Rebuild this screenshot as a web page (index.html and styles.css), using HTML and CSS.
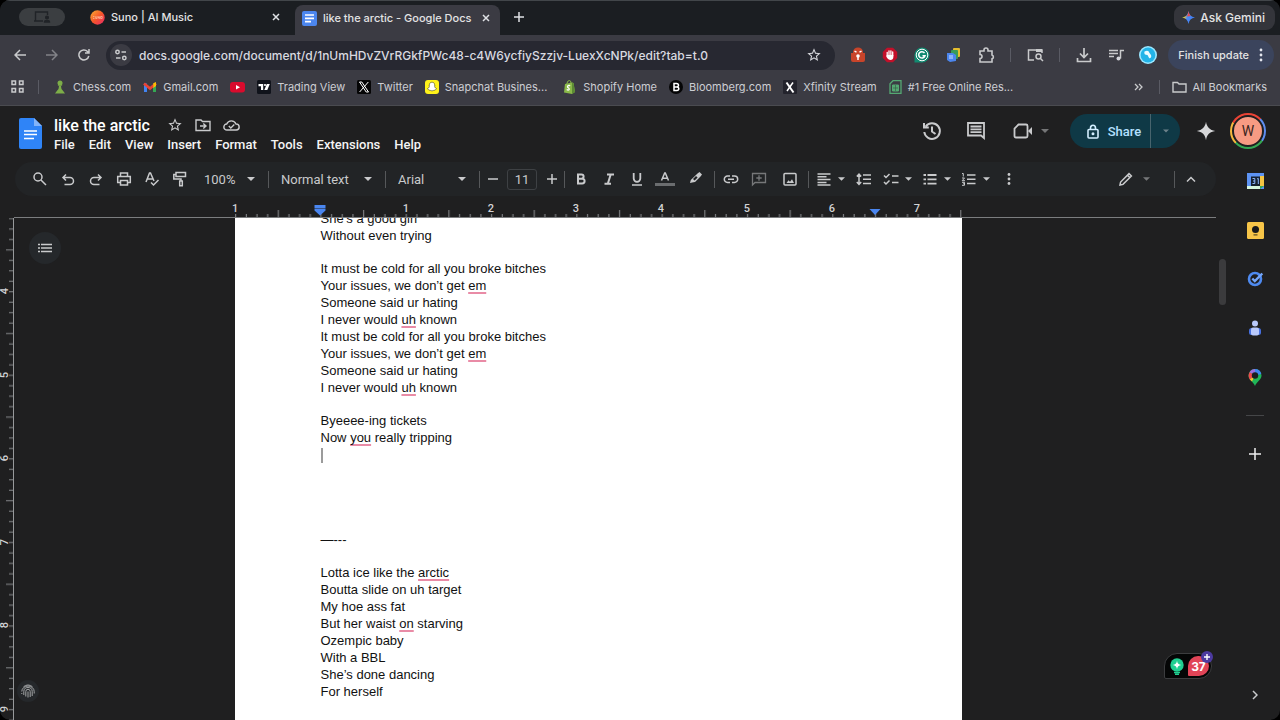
FILE: index.html
```html
<!DOCTYPE html>
<html lang="en">
  <head>
    <meta charset="UTF-8" />
    <meta name="viewport" content="width=device-width, initial-scale=1.0" />
    <title>like the arctic - Google Docs</title>
    <link rel="stylesheet" href="styles.css">
  </head>
  <body>
    <div class="window">
      <!-- Tabs -->
      <div class="tab-strip">
        <button class="share-pill" aria-label="Window sharing">
          <svg width="18" height="14" viewBox="0 0 18 14" fill="none" stroke="#202327" stroke-width="1.4"><path d="M10 11H2.5V2h12v3M1 11h9"/><circle cx="14" cy="7.5" r="1.4" fill="#202327"/><path d="M11.5 12c0-2 5-2 5 0z" fill="#202327"/></svg>
        </button>
        <div class="tab">
          <svg width="15" height="15" viewBox="0 0 15 15"><defs><linearGradient id="suno" x1="0" y1="0" x2="1" y2="1"><stop offset="0" stop-color="#f9b233"/><stop offset=".5" stop-color="#f5562a"/><stop offset="1" stop-color="#e8286b"/></linearGradient></defs><circle cx="7.5" cy="7.5" r="7.2" fill="url(#suno)"/><path d="M3 6.6h1.5M3 8.4h1.5M5.7 6.3v2.2h1.2V6.3M8.1 8.7V6.4l1.3 2.2V6.3M10.6 6.5h1.6v2h-1.6z" stroke="#ffd9b8" stroke-width=".6" fill="none"/></svg>
          <span>Suno | AI Music</span>
          <button class="tab-close" aria-label="Close tab"><svg width="8" height="8" viewBox="0 0 8 8"><path d="M1 1l6 6M7 1L1 7" stroke="#dfe1e5" stroke-width="1.5"/></svg></button>
        </div>
        <div class="tab active">
          <svg width="15" height="15" viewBox="0 0 15 15"><rect width="15" height="15" rx="2" fill="#4c86ee"/><path d="M3 4h9M3 7.3h9M3 10.6h6" stroke="#fff" stroke-width="1.7"/></svg>
          <span>like the arctic - Google Docs</span>
          <button class="tab-close" aria-label="Close tab"><svg width="8" height="8" viewBox="0 0 8 8"><path d="M1 1l6 6M7 1L1 7" stroke="#dfe1e5" stroke-width="1.5"/></svg></button>
        </div>
        <button class="new-tab" aria-label="New tab"><svg width="10" height="10" viewBox="0 0 10 10"><path d="M5 0v10M0 5h10" stroke="#dfe1e5" stroke-width="1.5"/></svg></button>
        <button class="gemini">
          <svg width="13" height="13" viewBox="0 0 24 24"><defs><linearGradient id="gem" x1="0" y1="0" x2="1" y2=".3"><stop offset=".1" stop-color="#3fc15c"/><stop offset=".3" stop-color="#e7c140"/><stop offset=".5" stop-color="#4c8bf5"/><stop offset="1" stop-color="#3e7bf0"/></linearGradient></defs><path d="M12 0c1 7 5 11 12 12-7 1-11 5-12 12-1-7-5-11-12-12 7-1 11-5 12-12z" fill="url(#gem)"/><path d="M12 0c.5 4 2 7 4 9l-7 1c2-3 2.600-6 3-10z" fill="#ea4a4a"/></svg>
          Ask Gemini
        </button>
      </div>

      <!-- Address bar -->
      <div class="nav-bar">
        <button class="nav-btn" aria-label="Back"><svg width="12" height="12" viewBox="0 0 12 12" class="line"><path d="M12 6H1M6 1L1 6l5 5"/></svg></button>
        <button class="nav-btn dim" aria-label="Forward"><svg width="12" height="12" viewBox="0 0 12 12" class="line"><path d="M0 6h11M6 1l5 5-5 5"/></svg></button>
        <button class="nav-btn" aria-label="Reload"><svg width="12" height="12" viewBox="0 0 12 12" class="line"><path d="M10.800 7A5 5 0 1 1 9.500 2.400L11 4M11 0v4H7"/></svg></button>
        <div class="address">
          <button class="site-info" aria-label="Site information"><svg width="12" height="12" viewBox="0 0 12 12" class="line"><circle cx="2.500" cy="3" r="1.700"/><path d="M6.500 3H11M1 9h4.500"/><circle cx="9.300" cy="9" r="1.700"/></svg></button>
          <input type="text" aria-label="Address" value="docs.google.com/document/d/1nUmHDvZVrRGkfPWc48-c4W6ycfiySzzjv-LuexXcNPk/edit?tab=t.0" />
          <button class="bookmark-star" aria-label="Bookmark this tab"><svg width="16" height="16" viewBox="0 0 24 24" fill="#d6d7dc"><path d="M22 9.240l-7.190-.62L12 2 9.190 8.630 2 9.240l5.460 4.730L5.820 21 12 17.270 18.180 21l-1.630-7.030L22 9.240zM12 15.400l-3.760 2.270 1-4.280-3.320-2.880 4.380-.38L12 6.100l1.710 4.040 4.380.38-3.320 2.880 1 4.280L12 15.400z"/></svg></button>
        </div>
        <div class="extensions">
          <button aria-label="Password lock"><svg width="16" height="16" viewBox="0 0 16 16"><path d="M3 6V5a5 4.500 0 0 1 10 0v1h2v7a2 2 0 0 1-2 2H3a2 2 0 0 1-2-2V6z" fill="#c8442a"/><path d="M4.500 4.200l2 1M11.500 4.200l-2 1" stroke="#fff" stroke-width="1.500"/><circle cx="8" cy="9" r="1.800" fill="#fff"/><path d="M8 9v4" stroke="#fff" stroke-width="1.500"/></svg></button>
          <button aria-label="Ad blocker"><svg width="16" height="16" viewBox="0 0 16 16"><path d="M5 .8h6L15.200 5v6L11 15.200H5L.8 11V5z" fill="#c3102a"/><path d="M5.200 9.500V5.300M7 8V3.800M8.900 8V3.800M10.700 9V5" stroke="#fff" stroke-width="1.300" stroke-linecap="round"/><path d="M4.600 8h6.700v2.500c0 3-5 3.500-6.700-.5z" fill="#fff"/></svg></button>
          <button aria-label="Grammarly"><svg width="16" height="16" viewBox="0 0 16 16"><path d="M.5 15.500V8A7.500 7.500 0 1 1 8 15.500z" fill="#128a71"/><circle cx="8" cy="8" r="5.800" fill="none" stroke="#fff" stroke-width="1"/><path d="M10.500 6A3.200 3.200 0 1 0 11 8.700H8.500" fill="none" stroke="#fff" stroke-width="1.500"/></svg></button>
          <button aria-label="Docs offline"><svg width="16" height="16" viewBox="0 0 16 16"><rect x="7" y="1" width="7" height="9" rx="1" fill="#e5bd2e"/><rect x="5" y="3" width="7" height="9" rx="1" fill="#3a9b58"/><path d="M1 6h6l3 2v6l-6 1-3-2z" fill="#4c86ee"/><path d="M3 9h4M3 11h4" stroke="#cfe0ff"/></svg></button>
          <button aria-label="Extensions"><svg width="17" height="17" viewBox="0 0 17 17" class="line"><path d="M2 4h4V3a2 2 0 0 1 4 0v1h4v4a2 2 0 0 1 0 3.800V15H2v-3.500a2 2 0 0 0 0-4z" stroke-width="1.600"/></svg></button>
          <i class="divider"></i>
          <button aria-label="Search side panel"><svg width="17" height="14" viewBox="0 0 17 14" class="line"><path d="M7 12H1.500V2H15v3" /><path d="M9 2.500h6" stroke-width="3"/><circle cx="11.500" cy="8.500" r="2.500"/><path d="M13.500 10.500l2.500 2.500"/></svg></button>
          <i class="divider"></i>
          <button aria-label="Downloads"><svg width="16" height="16" viewBox="0 0 16 16" class="line"><path d="M8 1v9M4 6.500l4 4 4-4M1.500 11v3.500h13V11" stroke-width="1.700"/></svg></button>
          <button aria-label="Media controls"><svg width="16" height="14" viewBox="0 0 16 14" class="line"><path d="M1 2.500h9M1 5.500h9M1 8.500h5M12.500 10.500v-8H16"/><circle cx="10.500" cy="10.500" r="2" fill="#d6d7dc" stroke="none"/></svg></button>
          <button aria-label="Profile"><svg width="18" height="18" viewBox="0 0 18 18"><circle cx="9" cy="9" r="9" fill="#9be7ff"/><circle cx="9" cy="9" r="7.400" fill="#22b4e8"/><path d="M5.500 5.500q4-2 5 1.500l1.500 2q1 3-1.800 3.300L8.500 9Q4.500 9 5.500 5.500z" fill="#e9fbff"/></svg></button>
        </div>
        <button class="finish-update">Finish update
          <svg width="4" height="14" viewBox="0 0 4 14" fill="#e3e6ee"><circle cx="2" cy="2" r="1.400"/><circle cx="2" cy="7" r="1.400"/><circle cx="2" cy="12" r="1.400"/></svg>
        </button>
      </div>

      <!-- Bookmarks -->
      <div class="bookmarks">
        <button class="apps" aria-label="Apps"><svg width="13" height="13" viewBox="0 0 13 13" class="line"><path d="M1 1h3.500v3.500H1zM8.500 1H12v3.500H8.500zM1 8.500h3.500V12H1zM8.500 8.500H12V12H8.500z"/></svg></button>
        <i class="divider"></i>
        <a href="#"><svg width="14" height="14" viewBox="0 0 14 14" fill="#7dae48"><circle cx="7" cy="3" r="2.500"/><path d="M4.500 5.300h5l-1.500 1q0 3 2 4.500l2 2.700H2L4 10.800q2-1.500 2-4.500z"/></svg>Chess.com</a>
        <a href="#"><svg width="14" height="14" viewBox="0 0 14 14"><path d="M1 12V3.500h3V12z" fill="#4285f4"/><path d="M10 12V3.500h3V12z" fill="#34a853"/><path d="M1 3.500l6 5 6-5" fill="none" stroke="#ea4335" stroke-width="2.800"/><path d="M10.300 3.200L13 2v4l-2.700 2z" fill="#fbbc04"/></svg>Gmail.com</a>
        <a href="#" aria-label="YouTube"><svg width="15" height="14" viewBox="0 0 15 14"><rect y="2" width="15" height="10.500" rx="3" fill="#d90b2d"/><path d="M6 5v4.500l4-2.300z" fill="#fff"/></svg></a>
        <a href="#"><svg width="14" height="14" viewBox="0 0 14 14"><rect width="14" height="14" rx="1.500" fill="#10131b"/><path d="M1.500 4h4.700v6H4V6.300H1.500zM9.800 4h3l-2.500 6h-3z" fill="#fff"/><circle cx="8" cy="5" r="1.100" fill="#fff"/></svg>Trading View</a>
        <a href="#"><svg width="14" height="14" viewBox="0 0 14 14"><rect width="14" height="14" rx="1.500" fill="#050506"/><path d="M2.500 2h2.300l6.700 10H9.200zM11.300 2L2.600 12" fill="none" stroke="#fff" stroke-width="1"/></svg>Twitter</a>
        <a href="#" class="truncated"><svg width="14" height="14" viewBox="0 0 14 14"><rect width="14" height="14" rx="3" fill="#fff21a"/><path d="M7 2.200c2 0 2.800 1.500 2.600 3.300.8 0 .8.600 0 1 .4 1.300 1.200 1.800 2 2.200-.3.800-1.500.7-1.700 1.400-1.300-.1-1.500.8-2.900.8s-1.600-.9-2.900-.8c-.2-.7-1.400-.6-1.700-1.400.8-.4 1.600-.9 2-2.200-.8-.4-.8-1 0-1C4.200 3.700 5 2.200 7 2.200z" fill="#fff" stroke="#45431c" stroke-width=".6"/></svg>Snapchat Busines...</a>
        <a href="#"><svg width="14" height="14" viewBox="0 0 14 14"><path d="M2 4l7-1.500 1.500.5L12 12l-3 2-8-1.500z" fill="#8ab949"/><path d="M9 2.500l1.500.5L12 12l-3 2z" fill="#5b8a34"/><path d="M3.800 4q.5-3.500 2.600-3.500Q8 .6 8 3" fill="none" stroke="#8ab949"/><path d="M7.200 5.700q-2.700-.7-2.700 1c0 1.300 2 1.200 1.800 2.500-.2 1.300-1.800 1-2.600.3" fill="none" stroke="#fff" stroke-width="1.300"/></svg>Shopify Home</a>
        <a href="#"><svg width="14" height="14" viewBox="0 0 14 14"><circle cx="7" cy="7" r="7" fill="#050506"/><path d="M5 3.500h2.500q2 .1 2 1.700T7.500 6.900H5zm0 3.400h2.800q2 .1 2 1.800T7.800 10.500H5z" fill="none" stroke="#fff" stroke-width="1.500"/></svg>Bloomberg.com</a>
        <a href="#"><svg width="14" height="14" viewBox="0 0 14 14"><rect width="14" height="14" rx="1" fill="#23232c"/><path d="M3.500 2.500l7 10" stroke="#fff" stroke-width="2"/><path d="M10 2.500l-6 8.500" stroke="#fff" stroke-width="1.500"/></svg>Xfinity Stream</a>
        <a href="#"><svg width="13" height="14" viewBox="0 0 13 14" fill="none" stroke="#55a873"><path d="M4 .7h8v12.600H1V3.700z" stroke-width="1.300"/><path d="M3.500 5h6v6h-6z" fill="#55a873"/><path d="M4 8h5M6.500 5v6" stroke="#345541" stroke-width=".6"/></svg>#1 Free Online Res...</a>
        <button class="overflow" aria-label="More bookmarks"><svg width="9" height="8" viewBox="0 0 9 8" class="line"><path d="M1 1l3 3-3 3M5 1l3 3-3 3" stroke-width="1.300"/></svg></button>
        <i class="divider"></i>
        <a href="#"><svg width="15" height="12" viewBox="0 0 15 12" class="line"><path d="M1 1.500h4.500L7 3h7v8H1z" stroke-width="1.400"/></svg>All Bookmarks</a>
      </div>

      <!-- Docs app -->
      <header class="doc-header">
        <a href="#" class="doc-logo" aria-label="Docs home"><svg width="23" height="31" viewBox="0 0 23 31"><path d="M2 0h13l8 8v21a2 2 0 0 1-2 2H2a2 2 0 0 1-2-2V2a2 2 0 0 1 2-2z" fill="#2f84f7"/><path d="M15 0l8 8h-8z" fill="#82b4fa"/><path d="M5 13h13M5 16.500h13M5 20.500h10" stroke="#fff" stroke-width="1.700"/></svg></a>
        <div class="doc-info">
          <div class="title-row">
            <h1>like the arctic</h1>
            <button aria-label="Star"><svg width="16" height="16" viewBox="0 0 24 24" fill="#c9cacc"><path d="M22 9.240l-7.190-.62L12 2 9.190 8.630 2 9.240l5.460 4.730L5.820 21 12 17.270 18.180 21l-1.630-7.030L22 9.240zM12 15.400l-3.760 2.270 1-4.280-3.320-2.880 4.380-.38L12 6.100l1.710 4.040 4.380.38-3.320 2.880 1 4.280L12 15.400z"/></svg></button>
            <button aria-label="Move"><svg width="16" height="14" viewBox="0 0 16 14" class="line"><path d="M1 2h5l1.500 1.500H15V12.500H1zM5 8h5.500M8.300 5.500L11 8l-2.700 2.500" stroke-width="1.400"/></svg></button>
            <button aria-label="Saved to Drive"><svg width="17" height="12" viewBox="0 0 17 12" class="line"><path d="M4 11a3 3 0 0 1-.3-6A5 5 0 0 1 13 5a3 3 0 0 1 .3 6zM5.800 7l2 2L11.300 5.500" stroke-width="1.400"/></svg></button>
          </div>
          <nav class="menus">
            <button>File</button>
            <button>Edit</button>
            <button>View</button>
            <button>Insert</button>
            <button>Format</button>
            <button>Tools</button>
            <button>Extensions</button>
            <button>Help</button>
          </nav>
        </div>
        <div class="header-actions">
          <button aria-label="Version history"><svg width="20" height="20" viewBox="0 0 20 20" fill="none" stroke="#c9cacc" stroke-width="2"><path d="M3.700 5.500a7.800 7.800 0 1 1-1.400 5.500M2 2v4.500h4.800M10 5.500v5l3.500 2.500"/></svg></button>
          <button aria-label="Comments"><svg width="20" height="20" viewBox="0 0 20 20" fill="none" stroke="#c9cacc" stroke-width="1.800"><path d="M2 2h16v15l-3-2.500H2zM4.500 5.500h11M4.500 8.300h11M4.500 11.100h11"/></svg></button>
          <button class="meet" aria-label="Meet"><svg width="20" height="16" viewBox="0 0 20 16" fill="none" stroke="#c9cacc" stroke-width="1.800"><path d="M5.500 1.500H13q1.500 0 1.500 1.500v10q0 1.500-1.500 1.500H3Q1.500 14.500 1.500 13V5.500z"/><path d="M15 8l4-4v8z" fill="#c9cacc" stroke="none"/></svg><svg class="caret dim" width="8" height="4" viewBox="0 0 8 4"><path d="M0 0h8L4 4z"/></svg></button>
          <div class="share">
            <button class="share-main"><svg width="12" height="15" viewBox="0 0 12 15" fill="none" stroke="#d3efff" stroke-width="1.600"><rect x="1" y="5.500" width="10" height="8.500" rx="1"/><path d="M3.500 5.500V4a2.500 2.700 0 0 1 5 0v1.500"/><circle cx="6" cy="9.700" r=".7"/></svg>Share</button>
            <button class="share-more" aria-label="Share options"><svg class="caret dim" width="6" height="4" viewBox="0 0 8 4"><path d="M0 0h8L4 4z"/></svg></button>
          </div>
          <button aria-label="Gemini"><svg width="20" height="20" viewBox="0 0 24 24" fill="#d6d7d9"><path d="M12 1c1 6.500 4.500 10 11 11-6.500 1-10 4.500-11 11-1-6.500-4.500-10-11-11 6.500-1 10-4.500 11-11z"/></svg></button>
          <button class="account" aria-label="Account"><span>W</span></button>
        </div>
      </header>

      <div class="doc-body">
        <main class="doc-main">
          <div class="toolbar">
            <button class="tool" aria-label="Search menus"><svg width="16" height="16" viewBox="0 0 16 16" class="line"><circle cx="6" cy="6" r="4"/><path d="M9 9l5 5"/></svg></button>
            <button class="tool" aria-label="Undo"><svg width="16" height="16" viewBox="0 0 16 16" class="line"><path d="M3 6.500h7a3.500 3.500 0 0 1 0 7H4.500M6 3.500l-3 3 3 3"/></svg></button>
            <button class="tool" aria-label="Redo"><svg width="16" height="16" viewBox="0 0 16 16" class="line"><path d="M13 6.500H6a3.500 3.500 0 0 0 0 7h5.500M10 3.500l3 3-3 3"/></svg></button>
            <button class="tool" aria-label="Print"><svg width="16" height="16" viewBox="0 0 16 16" class="line"><path d="M4.500 5V2h7v3M4.500 11.500H1.700V5.500h12.600v6h-2.800M4.500 9.500h7V14h-7z"/></svg></button>
            <button class="tool" aria-label="Spelling"><svg width="16" height="16" viewBox="0 0 16 16" class="line"><path d="M2 11L5.500 2h1L10 10M3.300 8h5.200M7 11.500l2.500 2.500L14.500 9"/></svg></button>
            <button class="tool" aria-label="Paint format"><svg width="16" height="16" viewBox="0 0 16 16" class="line"><path d="M4 1.500h9.500v4H4zM4 3.500H1.800V8H9v2M7.700 10h2.600v4.800H7.700z"/></svg></button>
            <div class="picker zoom">
              <select aria-label="Zoom"><option>100%</option></select>
              <svg class="caret" width="8" height="4" viewBox="0 0 8 4"><path d="M0 0h8L4 4z"/></svg>
            </div>
            <i class="sep"></i>
            <div class="picker style">
              <select aria-label="Styles"><option>Normal text</option></select>
              <svg class="caret" width="8" height="4" viewBox="0 0 8 4"><path d="M0 0h8L4 4z"/></svg>
            </div>
            <i class="sep"></i>
            <div class="picker font">
              <select aria-label="Font"><option>Arial</option></select>
              <svg class="caret" width="8" height="4" viewBox="0 0 8 4"><path d="M0 0h8L4 4z"/></svg>
            </div>
            <i class="sep"></i>
            <div class="font-size">
              <button aria-label="Decrease font size"><svg width="10" height="10" viewBox="0 0 10 10" class="line"><path d="M0 5h10"/></svg></button>
              <input type="text" aria-label="Font size" value="11" />
              <button aria-label="Increase font size"><svg width="10" height="10" viewBox="0 0 10 10" class="line"><path d="M0 5h10M5 0v10"/></svg></button>
            </div>
            <i class="sep"></i>
            <button class="tool" aria-label="Bold"><svg width="16" height="16" viewBox="0 0 16 16" class="line"><path d="M5 3.500h3.500a2 2 0 0 1 0 4.200H5zm0 4.200h4.200a2.300 2.300 0 0 1 0 4.800H5z" stroke-width="2"/></svg></button>
            <button class="tool" aria-label="Italic"><svg width="16" height="16" viewBox="0 0 16 16" class="line"><path d="M6 3.500h7M3.500 12.700h6.500M9.700 3.500L6.800 12.700" stroke-width="2"/></svg></button>
            <button class="tool" aria-label="Underline"><svg width="16" height="16" viewBox="0 0 16 16" class="line"><path d="M4.700 2v5.500a3.300 3.300 0 0 0 6.600 0V2" stroke-width="1.800"/><path d="M3 14h10"/></svg></button>
            <button class="tool" aria-label="Text color"><svg width="20" height="16" viewBox="0 0 20 16" class="line"><path d="M6.500 9.500L9.700 2h.6l3.200 7.500M7.600 7.300h4.800"/><path d="M0 13.500h20" stroke="#6b6d6f" stroke-width="3"/></svg></button>
            <button class="tool wide" aria-label="Highlight color"><svg width="16" height="16" viewBox="0 0 16 16"><path d="M9.500 2.500l2-1.500L14 3.500l-1.500 2L7 11l-2.800.5L2 12l.8-3zM8 5L5 8l1.600 1.600 3-3z" fill="#c9cacc" fill-rule="evenodd"/></svg></button>
            <i class="sep"></i>
            <button class="tool" aria-label="Insert link"><svg width="16" height="16" viewBox="0 0 16 16" class="line"><path d="M7 5H4.500a3.200 3.200 0 0 0 0 6.400H7M9 5h2.500a3.200 3.200 0 0 1 0 6.400H9M5 8.200h6"/></svg></button>
            <button class="tool dim" aria-label="Add comment"><svg width="16" height="16" viewBox="0 0 16 16" class="line"><path d="M1.500 14V2.500h13v9H4zM8 4.300v5.400M5.300 7h5.400" stroke-width="1.300"/></svg></button>
            <button class="tool wide" aria-label="Insert image"><svg width="16" height="16" viewBox="0 0 16 16" class="line"><rect x="2" y="2.500" width="12" height="11.500" rx="1"/><path d="M4.500 12l2-2.700 1.500 1.500 2-2.500 2 3.700z" fill="#c9cacc" stroke="none"/></svg></button>
            <i class="sep"></i>
            <button class="tool menu" aria-label="Align"><svg width="16" height="16" viewBox="0 0 16 16" class="line"><path d="M1.500 3h13M1.500 5.800h9M1.500 8.600h13M1.500 11.400h9M1.500 14h13" /></svg><svg class="caret" width="7" height="4" viewBox="0 0 8 4"><path d="M0 0h8L4 4z"/></svg></button>
            <button class="tool" aria-label="Line spacing"><svg width="16" height="16" viewBox="0 0 16 16" class="line"><path d="M7 4h8M7 8.300h8M7 12.600h8M3 4v9M.8 5.500L3 3.200l2.200 2.300M.8 11L3 13.300 5.200 11"/></svg></button>
            <button class="tool menu" aria-label="Checklist"><svg width="16" height="16" viewBox="0 0 16 16" class="line"><path d="M9 5h6.500M9 11.500h6.500M1 4.500l2 2L6.500 3M1 11l2 2 3.500-3.500"/></svg><svg class="caret" width="7" height="4" viewBox="0 0 8 4"><path d="M0 0h8L4 4z"/></svg></button>
            <button class="tool menu" aria-label="Bulleted list"><svg width="16" height="16" viewBox="0 0 16 16" class="line"><path d="M5.500 4h9M5.500 8.300h9M5.500 12.600h9M1.500 4H4M1.500 8.300H4M1.500 12.600H4" stroke-width="1.800"/></svg><svg class="caret" width="7" height="4" viewBox="0 0 8 4"><path d="M0 0h8L4 4z"/></svg></button>
            <button class="tool menu" aria-label="Numbered list"><svg width="16" height="16" viewBox="0 0 16 16" class="line"><path d="M6 4h8.500M6 8.300h8.500M6 12.600h8.500"/><path d="M1 2.500h1.300V5.500M1 7h2.500L1.200 9.700H4M1 11.300h2.500v3H1M2 12.800h1.500" stroke-width="1"/></svg><svg class="caret" width="7" height="4" viewBox="0 0 8 4"><path d="M0 0h8L4 4z"/></svg></button>
            <button class="tool" aria-label="More"><svg width="4" height="14" viewBox="0 0 4 14" fill="#c9cacc"><circle cx="2" cy="2.500" r="1.400"/><circle cx="2" cy="7" r="1.400"/><circle cx="2" cy="11.500" r="1.400"/></svg></button>
            <button class="tool mode" aria-label="Editing mode"><svg width="16" height="16" viewBox="0 0 16 16" class="line"><path d="M2 14l.6-3L11 2.600 13.400 5 5 13.400zM9.500 4.200l2.300 2.300"/></svg><svg class="caret dim" width="7" height="4" viewBox="0 0 8 4"><path d="M0 0h8L4 4z"/></svg></button>
            <i class="sep"></i>
            <button class="tool" aria-label="Hide menus"><svg width="10" height="6" viewBox="0 0 10 6" class="line"><path d="M1 5.500l4-4 4 4"/></svg></button>
          </div>

          <!-- 64 units per inch, scaled to the zoomed page -->
          <div class="ruler">
            <svg width="100%" height="17" aria-hidden="true">
              <defs>
                <pattern id="inch" width="64" height="17" patternUnits="userSpaceOnUse" patternTransform="scale(1.333 1)">
                  <path d="M.5 14v3M8.500 14v3M16.500 14v3M24.500 14v3M32.500 10v7M40.500 14v3M48.500 14v3M56.500 14v3" stroke="#85878a" stroke-width=".8"/>
                </pattern>
              </defs>
              <rect width="727" height="17" fill="url(#inch)"/>
              <g class="ruler-text" text-anchor="middle">
                <text x="0" y="12">1</text>
                <text x="171" y="12">1</text>
                <text x="256" y="12">2</text>
                <text x="341" y="12">3</text>
                <text x="426" y="12">4</text>
                <text x="512" y="12">5</text>
                <text x="597" y="12">6</text>
                <text x="682" y="12">7</text>
              </g>
              <path d="M79.500 5h11v3.500h-11zM79.500 9h11v1.500L85 15.500l-5.500-5z" fill="#4a86f0"/>
              <path d="M634.500 9h11l-5.500 6z" fill="#4a86f0"/>
            </svg>
          </div>

          <div class="workspace">
            <div class="side-ruler">
              <svg width="13" height="100%" aria-hidden="true">
                <defs>
                  <pattern id="inch-v" width="13" height="64" patternUnits="userSpaceOnUse" patternTransform="translate(0 73) scale(1 1.306)">
                    <path d="M9 .5h4M9 8.500h4M9 16.500h4M9 24.500h4M6 32.500h7M9 40.500h4M9 48.500h4M9 56.500h4" stroke="#85878a" stroke-width=".8"/>
                  </pattern>
                </defs>
                <rect width="13" height="100%" fill="url(#inch-v)"/>
                <g class="ruler-text" text-anchor="middle">
                  <text transform="translate(8 73) rotate(-90)">4</text>
                  <text transform="translate(8 157) rotate(-90)">5</text>
                  <text transform="translate(8 240) rotate(-90)">6</text>
                  <text transform="translate(8 324) rotate(-90)">7</text>
                  <text transform="translate(8 407) rotate(-90)">8</text>
                  <text transform="translate(8 491) rotate(-90)">9</text>
                </g>
              </svg>
            </div>
            <div class="canvas">
              <article class="page">
                <p>She’s a good girl<br>Without even trying</p>
                <p>It must be cold for all you broke bitches<br>Your issues, we don’t get <u>em</u><br>Someone said ur hating<br>I never would <u>uh</u> known<br>It must be cold for all you broke bitches<br>Your issues, we don’t get <u>em</u><br>Someone said ur hating<br>I never would <u>uh</u> known</p>
                <p>Byeeee-ing tickets<br>Now <u>you</u> really tripping<br><span class="cursor"></span><br><br><br><br><br>—---</p>
                <p>Lotta ice like the <u>arctic</u><br>Boutta slide on uh target<br>My hoe ass fat<br>But her waist <u>on</u> starving<br>Ozempic baby<br>With a BBL<br>She’s done dancing<br>For herself</p>
              </article>
            </div>
            <button class="outline-btn" aria-label="Show outline"><svg width="14" height="10" viewBox="0 0 14 10" class="line"><path d="M3 1.500h11M3 5h11M3 8.500h11M0 1.500h2M0 5h2M0 8.500h2"/></svg></button>
            <button class="finger-btn" aria-label="Authorship"><svg width="14" height="14" viewBox="0 0 14 14" fill="none" stroke="#a2a4a6" stroke-width="1"><path d="M2.500 2.800a6.500 6.500 0 0 1 9 0M.8 7.500a6.200 5.500 0 0 1 12.400 0v2M2.800 11V7.500a4.200 4 0 0 1 8.400 0V12M4.800 12.500v-5a2.200 2.200 0 0 1 4.400 0v5.500M7 7.500V13.500M.8 9v1"/></svg></button>
            <div class="assistant">
              <svg width="14" height="17" viewBox="0 0 14 17"><circle cx="7" cy="7" r="6.700" fill="#20cf91"/><path d="M4 14.500h6M5 16.300h4" stroke="#20cf91" stroke-width="1.500"/><path d="M7 2.800Q7.500 6.500 11.200 7 7.500 7.500 7 11.200 6.500 7.500 2.800 7 6.500 6.500 7 2.800z" fill="#fff"/></svg>
              <button class="issues" aria-label="37 suggestions">37</button>
              <svg class="plus-badge" width="12" height="12" viewBox="0 0 12 12"><circle cx="6" cy="6" r="6" fill="#4c3aa0"/><path d="M6 3v6M3 6h6" stroke="#fff" stroke-width="1.400"/></svg>
            </div>
          </div>
        </main>
        <div class="scroll-gutter"><div class="scroll-thumb"></div></div>

        <aside class="side-panel">
          <button aria-label="Calendar"><svg width="17" height="16" viewBox="0 0 17 16"><path d="M0 0h17v16H0z" fill="#5d93f3"/><path d="M13 3h4v10h-4z" fill="#f5c543"/><path d="M0 13h13v3H0z" fill="#d5f5de"/><path d="M13 13h4l-4 3z" fill="#34a853"/><path d="M4 3.500h9V13H4z" fill="#15202f"/><path d="M5.500 5.500h2.300v5H5.500M6 8h1.800M10 6l1.300-.6V11" fill="none" stroke="#8db6fa" stroke-width="1"/></svg></button>
          <button aria-label="Keep"><svg width="17" height="17" viewBox="0 0 17 17"><rect width="17" height="17" rx="1.500" fill="#f7c548"/><circle cx="8.500" cy="7.500" r="3.500" fill="#18191a"/><path d="M6.500 12.800h4" stroke="#5f4d20" stroke-width="1.300"/></svg></button>
          <button aria-label="Tasks"><svg width="17" height="16" viewBox="0 0 17 16" fill="none"><circle cx="8" cy="8" r="6" stroke="#4e8af0" stroke-width="2.600"/><path d="M5.300 7.500l2.500 2.500 7.500-7.500" stroke="#74a6fb" stroke-width="2.400"/></svg></button>
          <button aria-label="Contacts"><svg width="14" height="16" viewBox="0 0 14 16"><circle cx="7" cy="3.500" r="3" fill="#b9c9fb"/><rect x="1" y="8" width="12" height="7" rx="2.500" fill="#466fdf"/><rect x="3" y="7.500" width="8" height="8" rx="2" fill="#b9c9fb"/></svg></button>
          <button aria-label="Maps"><svg width="14" height="17" viewBox="0 0 14 17"><path d="M7 0a6.500 6.500 0 0 1 6.500 6.500C13.500 11 9 12 7 17 5 12 .5 11 .5 6.500A6.500 6.500 0 0 1 7 0z" fill="#20b558"/><path d="M7 0a6.500 6.500 0 0 1 6.300 5L7 6.500z" fill="#3f86ee"/><path d="M7 0v6.500L1.500 3.200A6.500 6.500 0 0 1 7 0z" fill="#9a6fe0"/><path d="M1.500 3.200L7 6.500 1.800 10.500C.3 8 .2 5.500 1.500 3.200z" fill="#ee4a4c"/><path d="M1.800 10.500L7 6.500l-3 6z" fill="#f5c32f"/><circle cx="7" cy="6.500" r="3.200" fill="#1c1e20"/></svg></button>
          <hr />
          <button aria-label="Get add-ons"><svg width="12" height="12" viewBox="0 0 12 12" stroke="#f0f0f0" stroke-width="1.500"><path d="M6 0v12M0 6h12"/></svg></button>
          <button class="hide-panel" aria-label="Hide side panel"><svg width="6" height="10" viewBox="0 0 6 10" class="line"><path d="M1 1l4 4-4 4"/></svg></button>
        </aside>
      </div>
    </div>
  </body>
</html>
```

FILE: styles.css
```css
* {
  box-sizing: border-box;
}
body {
  margin: 0;
  background: #000;
  color: #e3e3e3;
  font-family: Roboto, "Liberation Sans", sans-serif;
  font-size: 13px;
}
button {
  display: flex;
  align-items: center;
  justify-content: center;
  padding: 0;
  border: 0;
  background: none;
  color: inherit;
  font: inherit;
  cursor: pointer;
}
svg {
  display: block;
  flex: none;
}
a {
  color: inherit;
  text-decoration: none;
}
.line {
  fill: none;
  stroke: #c9cacc;
  stroke-width: 1.5;
}
.caret {
  fill: #c9cacc;
}
.dim {
  opacity: 0.5;
}
.window {
  display: flex;
  flex-direction: column;
  height: 100vh;
  border-radius: 10px;
  overflow: hidden;
  background: #1f1f20;
}

/* browser chrome */
.tab-strip,
.nav-bar,
.bookmarks {
  display: flex;
  align-items: center;
  flex: none;
  font-family: Inter, sans-serif;
}
.tab-strip {
  height: 35px;
  padding: 0 5px 2px 19px;
  border-top: 1px solid #42464a;
  background: #1b1e22;
  font-size: 11px;
  font-weight: 500;
}
.share-pill {
  width: 46px;
  height: 18px;
  margin-right: 16px;
  border-radius: 9px;
  background: #3b3e41;
}
.tab {
  display: flex;
  align-items: center;
  gap: 6px;
  width: 214px;
  height: 30px;
  padding: 0 12px 0 9px;
  white-space: nowrap;
}
.tab.active {
  width: 205px;
  align-self: flex-end;
  margin-bottom: -2px;
  padding: 0 7px 4px 7px;
  border-radius: 8px 8px 0 0;
  background: #3b3b43;
}
.tab-close {
  width: 14px;
  height: 14px;
  margin-left: auto;
}
.new-tab {
  width: 28px;
  height: 28px;
  margin-left: 5px;
}
.gemini {
  gap: 5px;
  height: 25px;
  margin-left: auto;
  padding: 0 10px 0 8px;
  border-radius: 9px;
  background: #34353b;
  font-size: 12px;
  font-weight: 500;
}
.nav-bar {
  height: 40px;
  padding: 0 6px;
  background: #3b3b43;
}
.nav-btn {
  width: 28px;
  height: 28px;
  margin-right: 4px;
}
.address {
  display: flex;
  align-items: center;
  flex: 1;
  height: 29px;
  margin-left: 4px;
  padding: 0 11px 0 4px;
  border-radius: 15px;
  background: #272831;
}
.site-info {
  width: 22px;
  height: 22px;
  border-radius: 11px;
  background: #3b3b43;
}
.address input {
  flex: 1;
  min-width: 0;
  padding: 0 7px;
  border: 0;
  background: none;
  color: #d9dae0;
  font: 500 12px Inter, sans-serif;
}
.bookmark-star {
  width: 20px;
  height: 20px;
}
.extensions {
  display: flex;
  align-items: center;
  gap: 4px;
  margin: 0 6px 0 9px;
}
.extensions button {
  width: 28px;
  height: 28px;
}
.divider {
  width: 1px;
  height: 14px;
  background: #5a5b64;
}
.extensions .divider {
  margin: 0 6px;
}
.finish-update {
  gap: 10px;
  height: 30px;
  padding: 0 11px 0 10px;
  border-radius: 15px;
  background: #3b445c;
  font-size: 11px;
  font-weight: 500;
}
.bookmarks {
  gap: 12px;
  height: 31px;
  padding: 0 13px 7px 11px;
  border-bottom: 1px solid #4a4b50;
  background: #3b3b43;
  color: #cdced3;
  font-size: 11px;
  white-space: nowrap;
}
.bookmarks a {
  display: flex;
  align-items: center;
  gap: 6px;
}
.bookmarks .truncated {
  margin-right: 4px;
}
.apps + .divider {
  margin: 0 2px;
}
.overflow {
  margin: 0 4px 0 auto;
}

/* document header */
.doc-header {
  display: flex;
  align-items: flex-start;
  flex: none;
  height: 54px;
  padding: 8px 14px 0 19px;
}
.doc-logo {
  margin-top: 4px;
}
.doc-info {
  margin-left: 12px;
}
.title-row {
  display: flex;
  align-items: center;
  gap: 12px;
  height: 22px;
}
.title-row h1 {
  margin: 0 5px 0 0;
  color: #fff;
  font-size: 16px;
  font-weight: 500;
}
.menus {
  display: flex;
  gap: 14px;
  height: 17px;
  color: #f4f4f4;
  font-weight: 500;
}
.header-actions {
  display: flex;
  align-items: center;
  height: 34px;
  margin-left: auto;
}
.header-actions > button {
  width: 44px;
  height: 34px;
}
.header-actions .meet {
  gap: 8px;
  width: 66px;
}
.share {
  display: flex;
  height: 34px;
  margin: 0 4px 0 6px;
  border-radius: 17px;
  overflow: hidden;
  background: #0f3946;
  color: #b4e0ff;
}
.share-main {
  gap: 9px;
  width: 81px;
  padding-left: 8px;
  border-right: 1px solid #48646d;
  font-weight: 500;
}
.share-more {
  width: 29px;
}
.header-actions .account {
  width: 36px;
  height: 36px;
  margin-left: 2px;
  border-radius: 50%;
  background: conic-gradient(#ea4335 45deg, #5f8df0 45deg 125deg, #34a853 125deg 225deg, #f5b83d 225deg 300deg, #ea4335 300deg);
}
.account span {
  display: grid;
  place-items: center;
  width: 32px;
  height: 32px;
  border: 2px solid #1f1f20;
  border-radius: 50%;
  background: #f79b83;
  color: #3b2520;
  font-size: 14px;
}

/* editor */
.doc-body {
  display: flex;
  flex: 1;
  min-height: 0;
}
.doc-main {
  display: flex;
  flex-direction: column;
  flex: 1;
  min-width: 0;
}
.toolbar {
  display: flex;
  align-items: center;
  flex: none;
  height: 34px;
  margin: 2px 0 4px 15px;
  padding: 0 11px;
  border-radius: 17px;
  background: #222426;
  color: #c9cacc;
}
.tool {
  width: 28px;
  height: 28px;
}
.tool.wide {
  width: 33px;
}
.tool.menu {
  gap: 6px;
  width: 39px;
}
.tool.mode {
  gap: 9px;
  width: 58px;
  margin-left: auto;
  padding-right: 18px;
}
.sep {
  width: 1px;
  height: 17px;
  margin: 0 2px;
  background: #56585a;
}
.picker {
  display: flex;
  align-items: center;
  padding: 0 11px 0 10px;
}
.picker select {
  flex: 1;
  min-width: 0;
  padding: 0;
  border: 0;
  appearance: none;
  background: none;
  color: inherit;
  font: inherit;
}
.picker.zoom {
  width: 72px;
}
.picker.style {
  width: 112px;
}
.picker.font {
  width: 89px;
}
.font-size {
  display: flex;
  align-items: center;
  gap: 4px;
}
.font-size button {
  width: 21px;
  height: 22px;
}
.font-size input {
  width: 30px;
  height: 21px;
  padding: 0;
  border: 1px solid #3e4144;
  border-radius: 3px;
  background: none;
  color: inherit;
  font: inherit;
  text-align: center;
}
.ruler {
  display: flex;
  justify-content: center;
  flex: none;
  margin-left: 14px;
  padding-right: 34px;
  border-bottom: 1px solid #7b7d7f;
}
.ruler svg {
  width: 727px;
  overflow: visible;
}
.ruler-text {
  fill: #d2d3d5;
  font-size: 11px;
  font-weight: 500;
}
.workspace {
  position: relative;
  display: flex;
  flex: 1;
  min-height: 0;
  overflow: hidden;
}
.side-ruler {
  border-right: 1px solid #97999b;
}
.canvas {
  display: flex;
  justify-content: center;
  flex: 1;
  padding-right: 34px;
}
.page {
  width: 727px;
  padding: 0 86px;
  background: #fff;
  color: #111;
  font: 13px/17px Arial, "Liberation Sans", sans-serif;
}
.page p {
  margin: 0 0 16px;
}
/* the page is scrolled half a line past the top edge */
.page p:first-child {
  margin-top: -8px;
}
.page u {
  text-decoration: underline 2px #e98ba6;
  text-underline-offset: 2px;
  text-decoration-skip-ink: none;
}
.cursor {
  display: inline-block;
  width: 2px;
  height: 15px;
  background: #9b9b9b;
  vertical-align: middle;
}
.outline-btn,
.finger-btn {
  position: absolute;
  border-radius: 50%;
  background: #25282b;
}
.outline-btn {
  top: 14px;
  left: 29px;
  width: 32px;
  height: 32px;
}
.finger-btn {
  bottom: 18px;
  left: 17px;
  width: 22px;
  height: 22px;
}
.assistant {
  position: absolute;
  right: 4px;
  bottom: 41px;
  display: flex;
  align-items: center;
  gap: 4px;
  height: 26px;
  padding: 0 2px 0 5px;
  border: 1px solid #3c3d3f;
  border-radius: 13px 13px 13px 2px;
  background: #050606;
}
.issues {
  width: 21px;
  height: 20px;
  border-radius: 10px 10px 10px 1px;
  background: #e14457;
  color: #fff;
  font: 700 12px Inter, sans-serif;
}
.plus-badge {
  position: absolute;
  top: -3px;
  right: -2px;
}
.scroll-gutter {
  width: 14px;
  padding: 99px 4px 0 3px;
}
.scroll-thumb {
  height: 46px;
  border-radius: 4px;
  background: #3b3b3d;
}
.side-panel {
  display: flex;
  flex-direction: column;
  align-items: center;
  gap: 25px;
  width: 50px;
  padding: 9px 0 13px;
}
.side-panel button {
  flex: none;
  width: 24px;
  height: 24px;
}
.side-panel hr {
  width: 18px;
  height: 1px;
  margin: 1px 0;
  border: 0;
  background: #454648;
}
.side-panel .hide-panel {
  margin-top: auto;
}
```
